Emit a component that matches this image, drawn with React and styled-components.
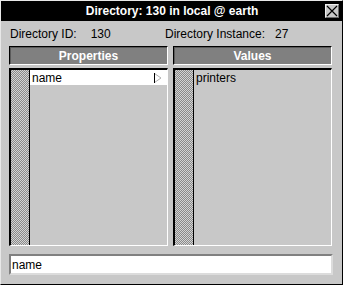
import styled, { createGlobalStyle } from 'styled-components';

const Global = createGlobalStyle`
  html, body {
    margin: 0;
    padding: 0;
    background: #c8c8c8;
  }
  body {
    font-family: "Liberation Sans", Arial, sans-serif;
    font-size: 12px;
    color: #000;
  }
`;

const Window = styled.div`
  width: 343px;
  height: 285px;
  box-sizing: border-box;
  border-top: 1px solid #e8e8e8;
  border-left: 1px solid #e8e8e8;
  border-right: 1px solid #000;
  border-bottom: 1px solid #000;
  background: #c8c8c8;
  display: flex;
  flex-direction: column;
`;

const TitleBar = styled.div`
  height: 20px;
  background: #000;
  color: #fff;
  display: grid;
  grid-template-columns: 1fr auto 1fr;
  align-items: center;
  font-weight: bold;
  font-size: 12px;
`;

const Title = styled.div`
  grid-column: 2;
  white-space: nowrap;
  margin-left: 1px;
`;

const CloseButton = styled.div`
  grid-column: 3;
  justify-self: end;
  width: 12px;
  height: 12px;
  margin-right: 3px;
  background: #c8c8c8;
  border-top: 1px solid #f0f0f0;
  border-left: 1px solid #f0f0f0;
  border-right: 1px solid #6a6a6a;
  border-bottom: 1px solid #6a6a6a;
  display: flex;
  align-items: center;
  justify-content: center;
`;

const Body = styled.div`
  flex: 1;
  display: flex;
  flex-direction: column;
  padding: 0 9px 0 8px;
`;

const InfoRow = styled.div`
  height: 25px;
  display: grid;
  grid-template-columns: 155px auto;
  align-items: center;
  padding-left: 1px;
`;

const InfoItem = styled.div`
  display: flex;
  white-space: nowrap;
`;

const InfoValue = styled.span`
  margin-left: ${p => p.$gap}px;
`;

const Columns = styled.div`
  display: grid;
  grid-template-columns: 159px 159px;
  column-gap: 5px;
`;

const Header = styled.div`
  height: 19px;
  box-sizing: border-box;
  background: #808080;
  color: #fff;
  font-weight: bold;
  display: flex;
  align-items: center;
  justify-content: center;
  border-top: 1px solid #000;
  border-left: 1px solid #000;
  border-right: 1px solid #fff;
  border-bottom: 1px solid #fff;
  box-shadow: inset 1px 1px 0 #5a5a5a;
`;

const ListRow = styled(Columns)`
  margin-top: 3px;
  grid-template-rows: 178px;
`;

const List = styled.div`
  box-sizing: border-box;
  display: flex;
  overflow: hidden;
  border-top: 2px solid #000;
  border-left: 2px solid #000;
  border-right: 1px solid #fff;
  border-bottom: 1px solid #fff;
`;

const Stripe = styled.div`
  width: 18px;
  flex-shrink: 0;
  border-right: 1px solid #000;
  overflow: hidden;

  svg {
    display: block;
  }
`;

const Items = styled.div`
  flex: 1;
  display: flex;
  flex-direction: column;
`;

const Item = styled.div`
  height: 15px;
  display: flex;
  align-items: center;
  justify-content: space-between;
  padding: 0 5px 0 2px;
  background: ${p => (p.$selected ? '#fff' : 'transparent')};
`;

const Field = styled.div`
  margin-top: 8px;
  height: 21px;
  box-sizing: border-box;
  background: #fff;
  border-top: 2px solid #808080;
  border-left: 2px solid #808080;
  border-right: 2px solid #dcdcdc;
  border-bottom: 2px solid #dcdcdc;
  display: flex;
  align-items: center;
  padding-left: 1px;
`;

const Checker = ({ id }) => (
  <svg width="18" height="100%" shapeRendering="crispEdges">
    <defs>
      <pattern id={id} width="2" height="2" patternUnits="userSpaceOnUse">
        <rect width="2" height="2" fill="#d4d4d4" />
        <rect width="1" height="1" fill="#8a8a8a" />
        <rect x="1" y="1" width="1" height="1" fill="#8a8a8a" />
      </pattern>
    </defs>
    <rect width="100%" height="100%" fill={`url(#${id})`} />
  </svg>
);

const Arrow = () => (
  <svg width="8" height="10" viewBox="0 0 8 10">
    <path d="M0.5 0.5 L7 5 L0.5 9.5" fill="none" stroke="#b0b0b0" strokeWidth="1" />
    <path d="M0.5 0 V10" stroke="#000" strokeWidth="1" />
  </svg>
);

const CloseIcon = () => (
  <svg width="12" height="12" viewBox="0 0 12 12">
    <path d="M1 1 L11 11 M11 1 L1 11" stroke="#000" strokeWidth="1.2" />
  </svg>
);

const App = () => (
  <>
    <Global />
    <Window>
      <TitleBar>
        <Title>Directory: 130 in local @ earth</Title>
        <CloseButton>
          <CloseIcon />
        </CloseButton>
      </TitleBar>
      <Body>
        <InfoRow>
          <InfoItem>
            Directory ID:<InfoValue $gap={14}>130</InfoValue>
          </InfoItem>
          <InfoItem>
            Directory Instance:<InfoValue $gap={10}>27</InfoValue>
          </InfoItem>
        </InfoRow>
        <Columns>
          <Header>Properties</Header>
          <Header>Values</Header>
        </Columns>
        <ListRow>
          <List>
            <Stripe>
              <Checker id="chk-props" />
            </Stripe>
            <Items>
              <Item $selected>
                name
                <Arrow />
              </Item>
            </Items>
          </List>
          <List>
            <Stripe>
              <Checker id="chk-values" />
            </Stripe>
            <Items>
              <Item>printers</Item>
            </Items>
          </List>
        </ListRow>
        <Field>name</Field>
      </Body>
    </Window>
  </>
);

export default App;
